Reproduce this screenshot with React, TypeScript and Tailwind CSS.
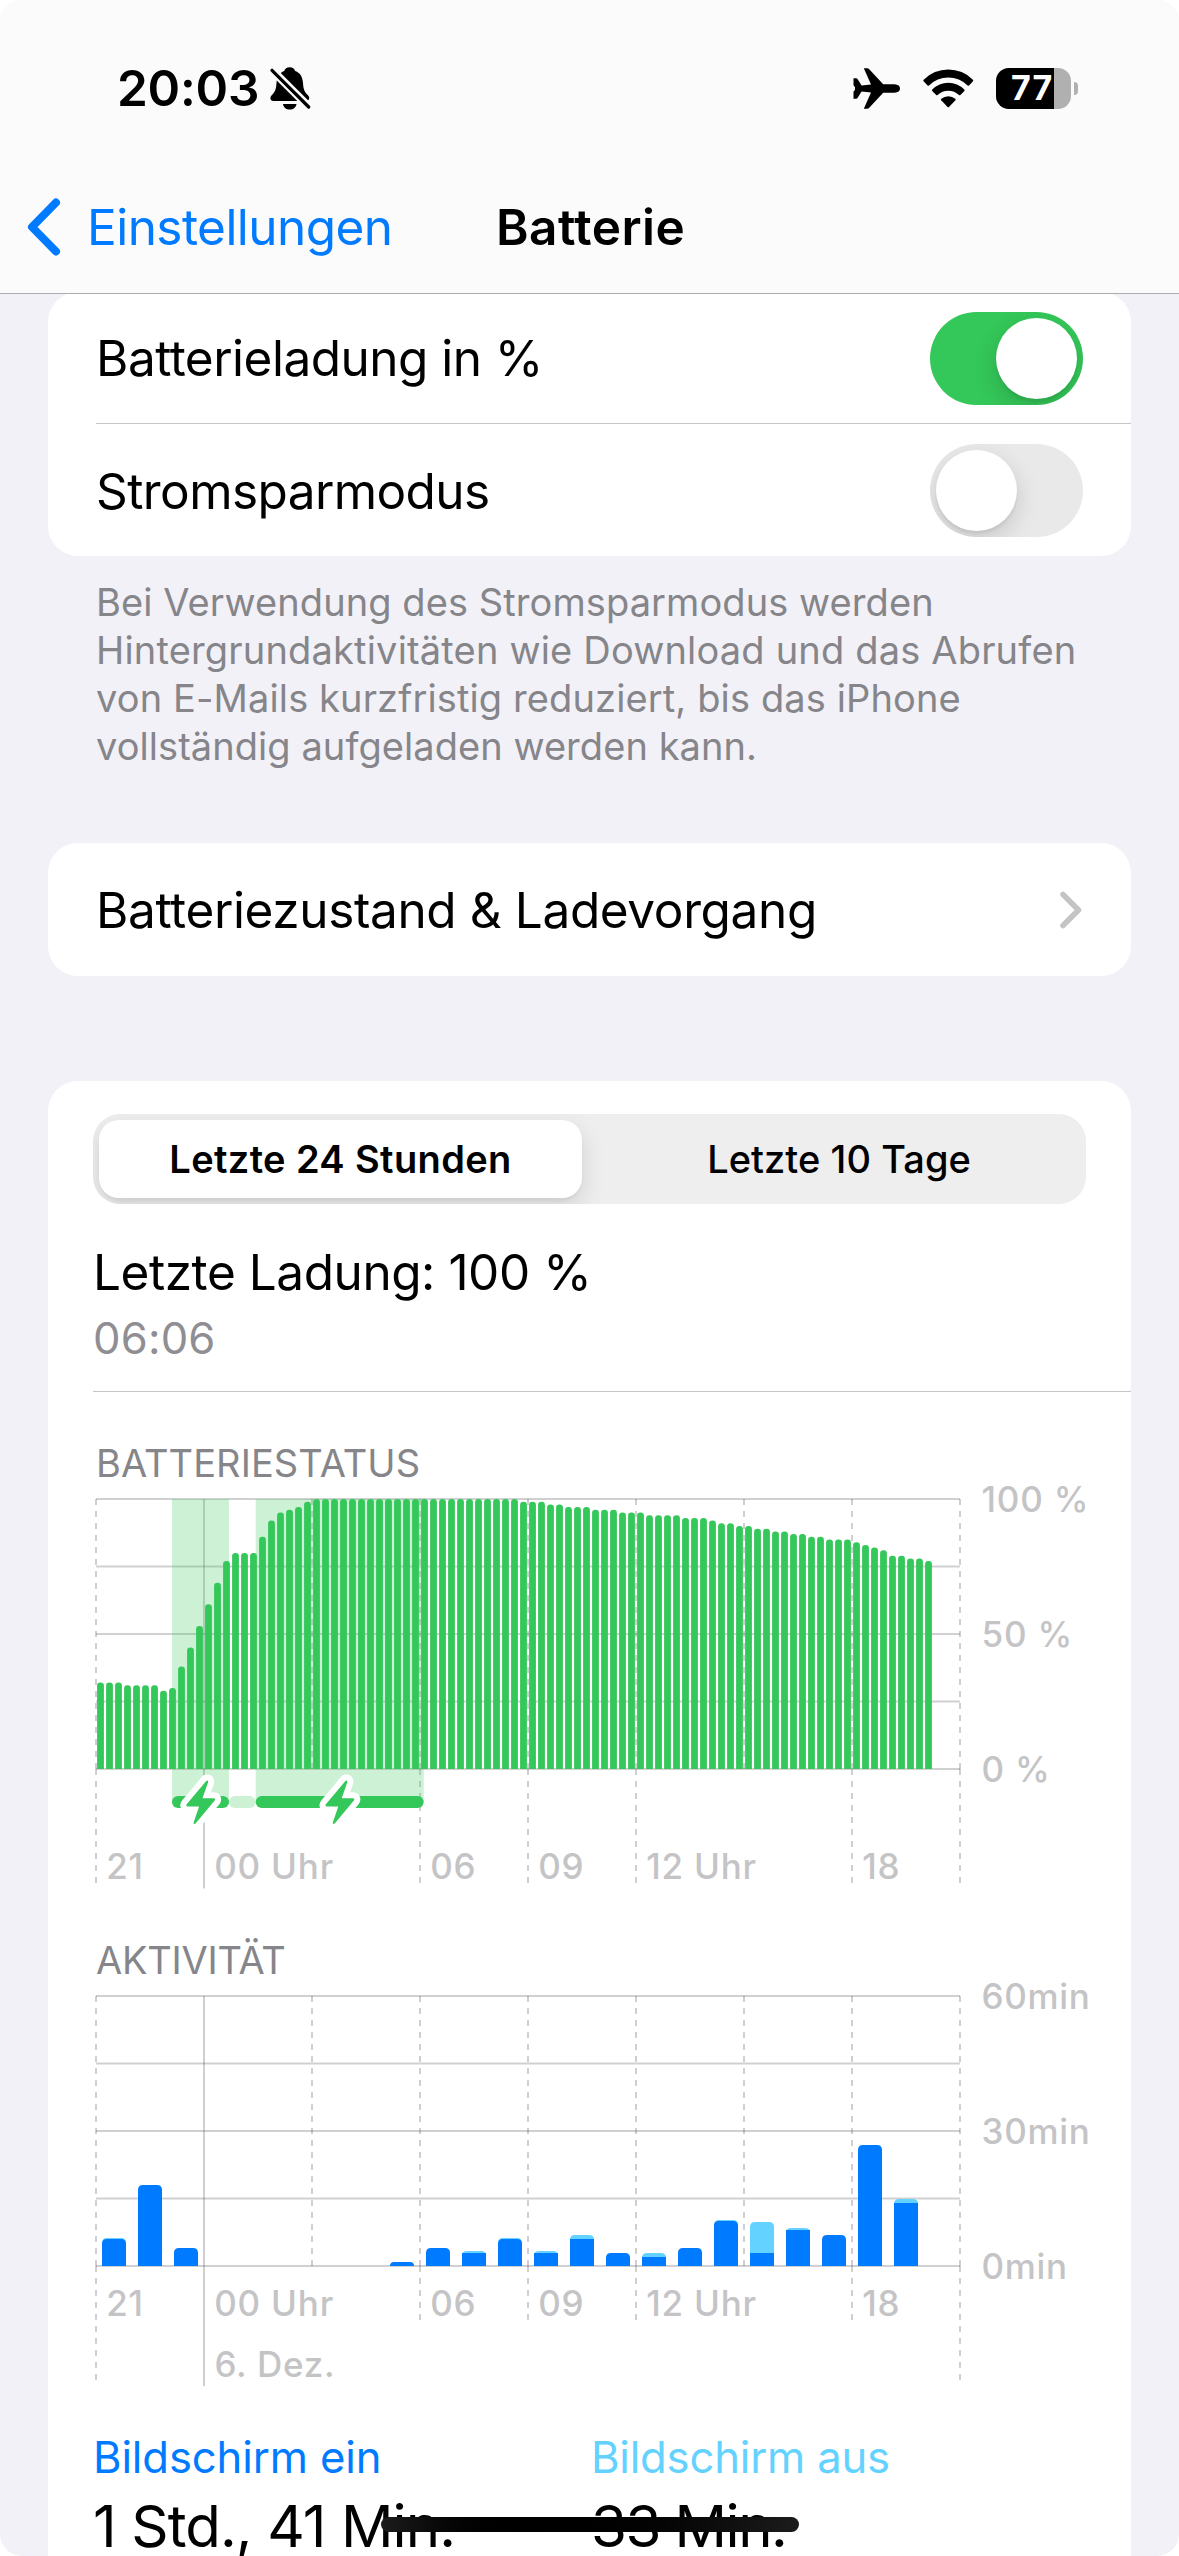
import React from "react";

const PLOT_X = 3;
const PLOT_Y = 13;
const PLOT_W = 864;
const PLOT_H = 270;
const HOUR = 36;
const LINE = "rgba(60,60,67,0.24)";

function runs(pairs: [number, number][]): number[] {
  return pairs.flatMap(([value, count]) => Array<number>(count).fill(value));
}

// Battery level in percent, one entry per quarter of an hour.
const LEVELS = runs([
  [32, 3], [31, 4], [29, 1], [30, 1], [38, 1], [45, 1], [53, 1], [61, 1], [69, 1], [77, 1],
  [80, 3], [86, 1], [92, 1], [95, 1], [96, 1], [97, 1], [99, 1], [100, 23], [99, 3], [98, 2],
  [97, 3], [96, 3], [95, 3], [94, 4], [93, 3], [92, 1], [91, 2], [90, 2], [89, 2], [88, 2],
  [87, 2], [86, 2], [85, 3], [84, 1], [83, 1], [82, 1], [81, 1], [79, 2], [78, 2], [77, 1],
]);

// Activity per hour: [hour index, total height, screen-on height].
const ACTIVITY: [number, number, number][] = [
  [0, 28, 27], [1, 81, 81], [2, 18, 18], [8, 4, 4], [9, 18, 18], [10, 15, 13], [11, 28, 27],
  [12, 15, 13], [13, 31, 27], [14, 13, 13], [15, 13, 9], [16, 18, 18], [17, 46, 45],
  [18, 44, 13], [19, 38, 36], [20, 31, 31], [21, 121, 121], [22, 67, 63],
];

const HOURS: [number, string][] = [[0, "21"], [3, "00 Uhr"], [9, "06"], [12, "09"], [15, "12 Uhr"], [21, "18"]];

function topRounded(x: number, w: number, bottom: number, h: number, r: number) {
  const q = Math.min(r, h);
  const top = bottom - h;
  return `M${x} ${bottom}V${top + q}Q${x} ${top} ${x + q} ${top}H${x + w - q}Q${x + w} ${top} ${x + w} ${top + q}V${bottom}Z`;
}

function Grid({ short, edge, midnight }: { short: number; edge: number; midnight: number }) {
  const bottom = PLOT_Y + PLOT_H;
  return (
    <g stroke={LINE} strokeWidth="2" fill="none">
      {[0, 1, 2, 3, 4].map((i) => (
        <path key={i} d={`M${PLOT_X} ${PLOT_Y + i * 67.5}h${PLOT_W}`} />
      ))}
      {[0, 3, 6, 9, 12, 15, 18, 21, 24].map((h) => {
        const x = PLOT_X + h * HOUR;
        if (h === 3) return <path key={h} d={`M${x} ${PLOT_Y}V${bottom + midnight}`} />;
        const tail = h === 6 || h === 18 ? 0 : h === 0 || h === 24 ? edge : short;
        return (
          <g key={h} strokeDasharray="6 6">
            <path d={`M${x} ${PLOT_Y}V${bottom}`} />
            {tail > 0 && <path d={`M${x} ${bottom}v${tail}`} />}
          </g>
        );
      })}
    </g>
  );
}

function HourLabels({ y }: { y: number }) {
  return (
    <>
      {HOURS.map(([h, label]) => (
        <text key={h} x={PLOT_X + h * HOUR + 10.2} y={y} className="tracking-[0.8px]">
          {label}
        </text>
      ))}
    </>
  );
}

function Bolt({ x, y }: { x: number; y: number }) {
  const d = "M20.5 1.2C21.6-.3 23.2.5 22.6 2.2L17 18.2H28C29.8 18.2 30 19.4 29.2 20.4L10.2 43.2C9 44.6 7.6 43.8 8.2 42.2L13.6 26.4H2.2C.6 26.4.4 25 1.4 24Z";
  return (
    <g transform={`translate(${x} ${y})`}>
      <path d={d} fill="#fff" stroke="#fff" strokeWidth="12" strokeLinejoin="round" />
      <path d={d} fill="#34c759" />
    </g>
  );
}

function BatteryChart() {
  const bottom = PLOT_Y + PLOT_H;
  return (
    <svg width="1038" height="404" viewBox="0 0 1038 404" className="block shrink-0 overflow-visible fill-[#c4c4c6] font-[Inter] text-[35px] font-medium">
      <Grid short={114} edge={114} midnight={119.5} />
      <g fill="#34c759" fillOpacity="0.25">
        <rect x="79" y={PLOT_Y} width="57" height="303" />
        <rect x="162.7" y={PLOT_Y} width="168" height="303" />
        <rect x="136" y="310" width="26.7" height="12" rx="6" />
      </g>
      <g fill="#34c759">
        {LEVELS.map((v, i) => (
          <path key={i} d={topRounded(PLOT_X + i * 9 + 1.1, 6.8, bottom, v * 2.7, 3.2)} />
        ))}
        <rect x="79" y="310" width="57" height="12" rx="6" />
        <rect x="162.7" y="310" width="168" height="12" rx="6" />
      </g>
      <Bolt x={92.5} y={294} />
      <Bolt x={231.7} y={294} />
      <HourLabels y={393} />
      <g className="tracking-[0.8px]">
        <text x="888.5" y={PLOT_Y + 13}>100 %</text>
        <text x="888.5" y={PLOT_Y + 148}>50 %</text>
        <text x="888.5" y={PLOT_Y + 283}>0 %</text>
      </g>
    </svg>
  );
}

function ActivityChart() {
  const bottom = PLOT_Y + PLOT_H;
  return (
    <svg width="1038" height="407" viewBox="0 0 1038 407" className="block shrink-0 overflow-visible fill-[#c4c4c6] font-[Inter] text-[35px] font-medium">
      <Grid short={54} edge={114} midnight={120} />
      {ACTIVITY.map(([h, total, on]) => {
        const x = PLOT_X + h * HOUR + 6;
        return (
          <g key={h}>
            {total > on && <path d={topRounded(x, 24, bottom, total, 5)} fill="#64d2ff" />}
            {total - on > 1 ? (
              <rect x={x} y={bottom - on} width="24" height={on} fill="#007aff" />
            ) : (
              <path d={topRounded(x, 24, bottom, on, 5)} fill="#007aff" />
            )}
          </g>
        );
      })}
      <HourLabels y={333} />
      <g className="tracking-[0.7px]">
        <text x="121.5" y="394">6. Dez.</text>
        <text x="888.5" y={PLOT_Y + 13}>60min</text>
        <text x="888.5" y={PLOT_Y + 148}>30min</text>
        <text x="888.5" y={PLOT_Y + 283}>0min</text>
      </g>
    </svg>
  );
}

function BellSlash() {
  return (
    <svg width="41" height="43" viewBox="0 0 41 43" className="mt-[1px] ml-[11px] block">
      <path d="M19.7.2C16.8.2 14.9 1.8 14.2 4 9 6 7 10.2 6.5 16 6 23 5 25 1.5 28.5-.7 31 .5 34 3.5 34H36C39 34 40.300 31 38.200 28.500 34.500 25 33.500 23 33 16 32.500 10 30.500 6 25.200 4 24.500 1.800 22.600.2 19.700.2Z" />
      <path d="M13 37H26.500C26 40.500 23.500 42.600 19.700 42.600 16 42.600 13.500 40.500 13 37Z" />
      <path d="M-1 0L42 43" stroke="#fbfbfc" strokeWidth="8" />
      <path d="M2 3.300L38.700 40" stroke="#000" strokeWidth="3.200" strokeLinecap="round" />
    </svg>
  );
}

function Airplane() {
  return (
    <svg width="47" height="43" viewBox="0 0 47 42.6" className="block">
      <path d="M.5 11H3.200Q4 11 4.500 11.800L8.600 18.300 18 17.200 10.800 1.100H14.200Q15.300 1.100 16 1.900L30.200 17H41.500Q47 17.500 47 21.300 47 25.100 41.500 25.600H30.200L16 40.700Q15.300 41.500 14.200 41.500H10.800L18 25.400 8.600 24.300 4.500 30.800Q4 31.600 3.200 31.600H.5V24.500L2 22.500V20.100L.5 18.100Z" />
    </svg>
  );
}

function Wifi() {
  return (
    <svg width="51" height="39" viewBox="0 0 51 39" className="ml-[23px] block">
      <path d="M.6 12.200Q0 11.400.7 10.700A34.500 34.500 0 0 1 49.900 10.700Q50.600 11.400 50 12.200L46 16.500Q45.300 17.200 44.600 16.500A27 27 0 0 0 6 16.500Q5.300 17.200 4.600 16.500Z" />
      <path d="M9.200 22Q8.600 21.300 9.300 20.600A22 22 0 0 1 41.300 20.600Q42 21.300 41.400 22L37.400 26Q36.700 26.700 36 26A15.500 15.500 0 0 0 14.600 26Q13.900 26.700 13.200 26Z" />
      <path d="M18.200 31.300Q17.500 30.500 18.300 29.800A11 11 0 0 1 32.300 29.800Q33.100 30.500 32.400 31.300L26 37.900Q25.300 38.600 24.600 37.900Z" />
    </svg>
  );
}

function BatteryIcon() {
  return (
    <div className="ml-[22px] flex items-center">
      <div className="flex h-[41px] w-[75px] overflow-hidden rounded-[13px] bg-[#b0b0b0]">
        <div className="flex w-[58px] items-center bg-black pl-[15px] text-[34px] leading-none font-bold tracking-[1px] text-white">77</div>
      </div>
      <div className="ml-[3px] h-[13px] w-[4px] rounded-r-full bg-[#b0b0b0]" />
    </div>
  );
}

function Toggle({ on }: { on: boolean }) {
  return on ? (
    <div className="flex h-[93px] w-[153px] justify-end overflow-hidden rounded-full bg-[#34c759] p-[6px]">
      <div className="size-[81px] rounded-full bg-white shadow-[0_9px_24px_rgba(0,0,0,0.15),0_3px_3px_rgba(0,0,0,0.06)]" />
    </div>
  ) : (
    <div className="flex h-[93px] w-[153px] overflow-hidden rounded-full bg-[#e9e9ea] p-[6px]">
      <div className="size-[81px] rounded-full bg-white shadow-[0_9px_24px_rgba(0,0,0,0.15),0_3px_3px_rgba(0,0,0,0.06)]" />
    </div>
  );
}

function Header() {
  return (
    <header className="flex h-[294px] shrink-0 flex-col border-b border-[#adadb0] bg-[#fbfbfc]">
      <div className="flex h-[176px] items-center justify-between pr-[101px] pl-[117px]">
        <div className="flex items-center">
          <span className="pt-[2px] text-[49.5px] leading-none font-semibold tracking-[-0.23px]">20:03</span>
          <BellSlash />
        </div>
        <div className="flex items-center">
          <Airplane />
          <Wifi />
          <BatteryIcon />
        </div>
      </div>
      <div className="flex h-[102px] items-center">
        <div className="flex w-[496px] items-center text-[#007aff]">
          <svg width="34" height="58" viewBox="0 0 34 58" className="ml-[27px] block" fill="none" stroke="#007aff" strokeWidth="8" strokeLinecap="round" strokeLinejoin="round">
            <path d="M29 4.500L5 29 29 53.500" />
          </svg>
          <span className="ml-[26px] pt-[1px] text-[49.5px] leading-none tracking-[-0.55px]">Einstellungen</span>
        </div>
        <h1 className="pt-[1px] text-[49.5px] leading-none font-semibold tracking-[0.45px]">Batterie</h1>
      </div>
    </header>
  );
}

export default function App() {
  return (
    <div className="h-[2556px] w-[1179px] overflow-hidden bg-white font-[Inter,sans-serif] text-black">
      <div className="relative flex h-full flex-col overflow-hidden rounded-[22px] bg-[#f2f1f7]">
        <Header />

        <main className="flex flex-col px-[48px]">
          <section className="-mt-[2px] h-[264px] rounded-[30px] bg-white pl-[48px] [clip-path:inset(2px_0_0_0)]">
            <div className="flex h-[132px] items-center justify-between border-b border-[#c6c6c8] pt-[1px] pr-[48px]">
              <span className="pt-[2px] text-[49.5px] leading-none tracking-[-0.51px]">Batterieladung in %</span>
              <Toggle on />
            </div>
            <div className="flex h-[132px] items-center justify-between pr-[48px]">
              <span className="pt-[3px] text-[49.5px] leading-none tracking-[-0.58px]">Stromsparmodus</span>
              <Toggle on={false} />
            </div>
          </section>

          <p className="mt-[22px] flex flex-col pl-[48px] text-[38px] leading-[48px] whitespace-nowrap text-[#85858a]">
            <span className="tracking-[0.08px]">Bei Verwendung des Stromsparmodus werden</span>
            <span className="tracking-[0.18px]">Hintergrundaktivitäten wie Download und das Abrufen</span>
            <span className="tracking-[0.12px]">von E-Mails kurzfristig reduziert, bis das iPhone</span>
            <span className="tracking-[0.06px]">vollständig aufgeladen werden kann.</span>
          </p>

          <section className="mt-[73px] flex h-[133px] items-center justify-between rounded-[30px] bg-white pr-[49px] pl-[48px]">
            <span className="pt-[3px] text-[49.5px] leading-none tracking-[-0.37px]">Batteriezustand &amp; Ladevorgang</span>
            <svg width="23" height="38" viewBox="0 0 23 38" fill="none" stroke="#c4c4c7" strokeWidth="5.500" strokeLinecap="round" strokeLinejoin="round">
              <path d="M4 3.500L19.500 19 4 34.500" />
            </svg>
          </section>

          <section className="mt-[105px] flex h-[1500px] flex-col rounded-t-[30px] bg-white pt-[33px] pl-[45px]">
            <div className="flex h-[90px] w-[993px] shrink-0 overflow-hidden rounded-[27px] bg-[#eeeeee] p-[6px] text-[38px] leading-none">
              <div className="flex w-[483px] shrink-0 items-center justify-center rounded-[20px] bg-white font-semibold tracking-[0.38px] shadow-[0_9px_24px_rgba(0,0,0,0.12),0_3px_3px_rgba(0,0,0,0.04)]">
                Letzte 24 Stunden
              </div>
              <div className="flex grow items-center justify-center pl-[16px] font-medium tracking-[0.06px]">Letzte 10 Tage</div>
            </div>
            <div className="mt-[38px] shrink-0 text-[49.5px] leading-[60px] tracking-[-0.44px]">Letzte Ladung: 100 %</div>
            <div className="mt-[13px] shrink-0 text-[43.600px] leading-[48px] tracking-[0.18px] text-[#8e8e93]">06:06</div>
            <div className="mt-[28px] h-px shrink-0 bg-[#c6c6c8]" />

            <h2 className="mt-[48px] shrink-0 pl-[3px] text-[38px] leading-[46px] tracking-[0.07px] text-[#85858a]">BATTERIESTATUS</h2>
            <BatteryChart />

            <h2 className="mt-[47px] shrink-0 pl-[3px] text-[38px] leading-[46px] tracking-[-0.25px] text-[#85858a]">AKTIVITÄT</h2>
            <ActivityChart />

            <div className="mt-[43px] grid shrink-0 grid-cols-[498px_1fr] whitespace-nowrap">
              <div className="flex flex-col gap-[8px]">
                <span className="text-[43.600px] leading-[50px] tracking-[-0.11px] text-[#007aff]">Bildschirm ein</span>
                <span className="text-[58.200px] leading-[70px] tracking-[-0.9px]">1 Std., 41 Min.</span>
              </div>
              <div className="flex flex-col gap-[8px]">
                <span className="text-[43.600px] leading-[50px] tracking-[-0.18px] text-[#64d2ff]">Bildschirm aus</span>
                <span className="text-[58.200px] leading-[70px] tracking-[-1.55px]">33 Min.</span>
              </div>
            </div>
          </section>
        </main>

        <div className="absolute bottom-[24px] left-[381px] h-[15px] w-[418px] rounded-full bg-linear-to-r from-[#1c1c1c] via-black via-35% to-[#1c1c1c]" />
      </div>
    </div>
  );
}
